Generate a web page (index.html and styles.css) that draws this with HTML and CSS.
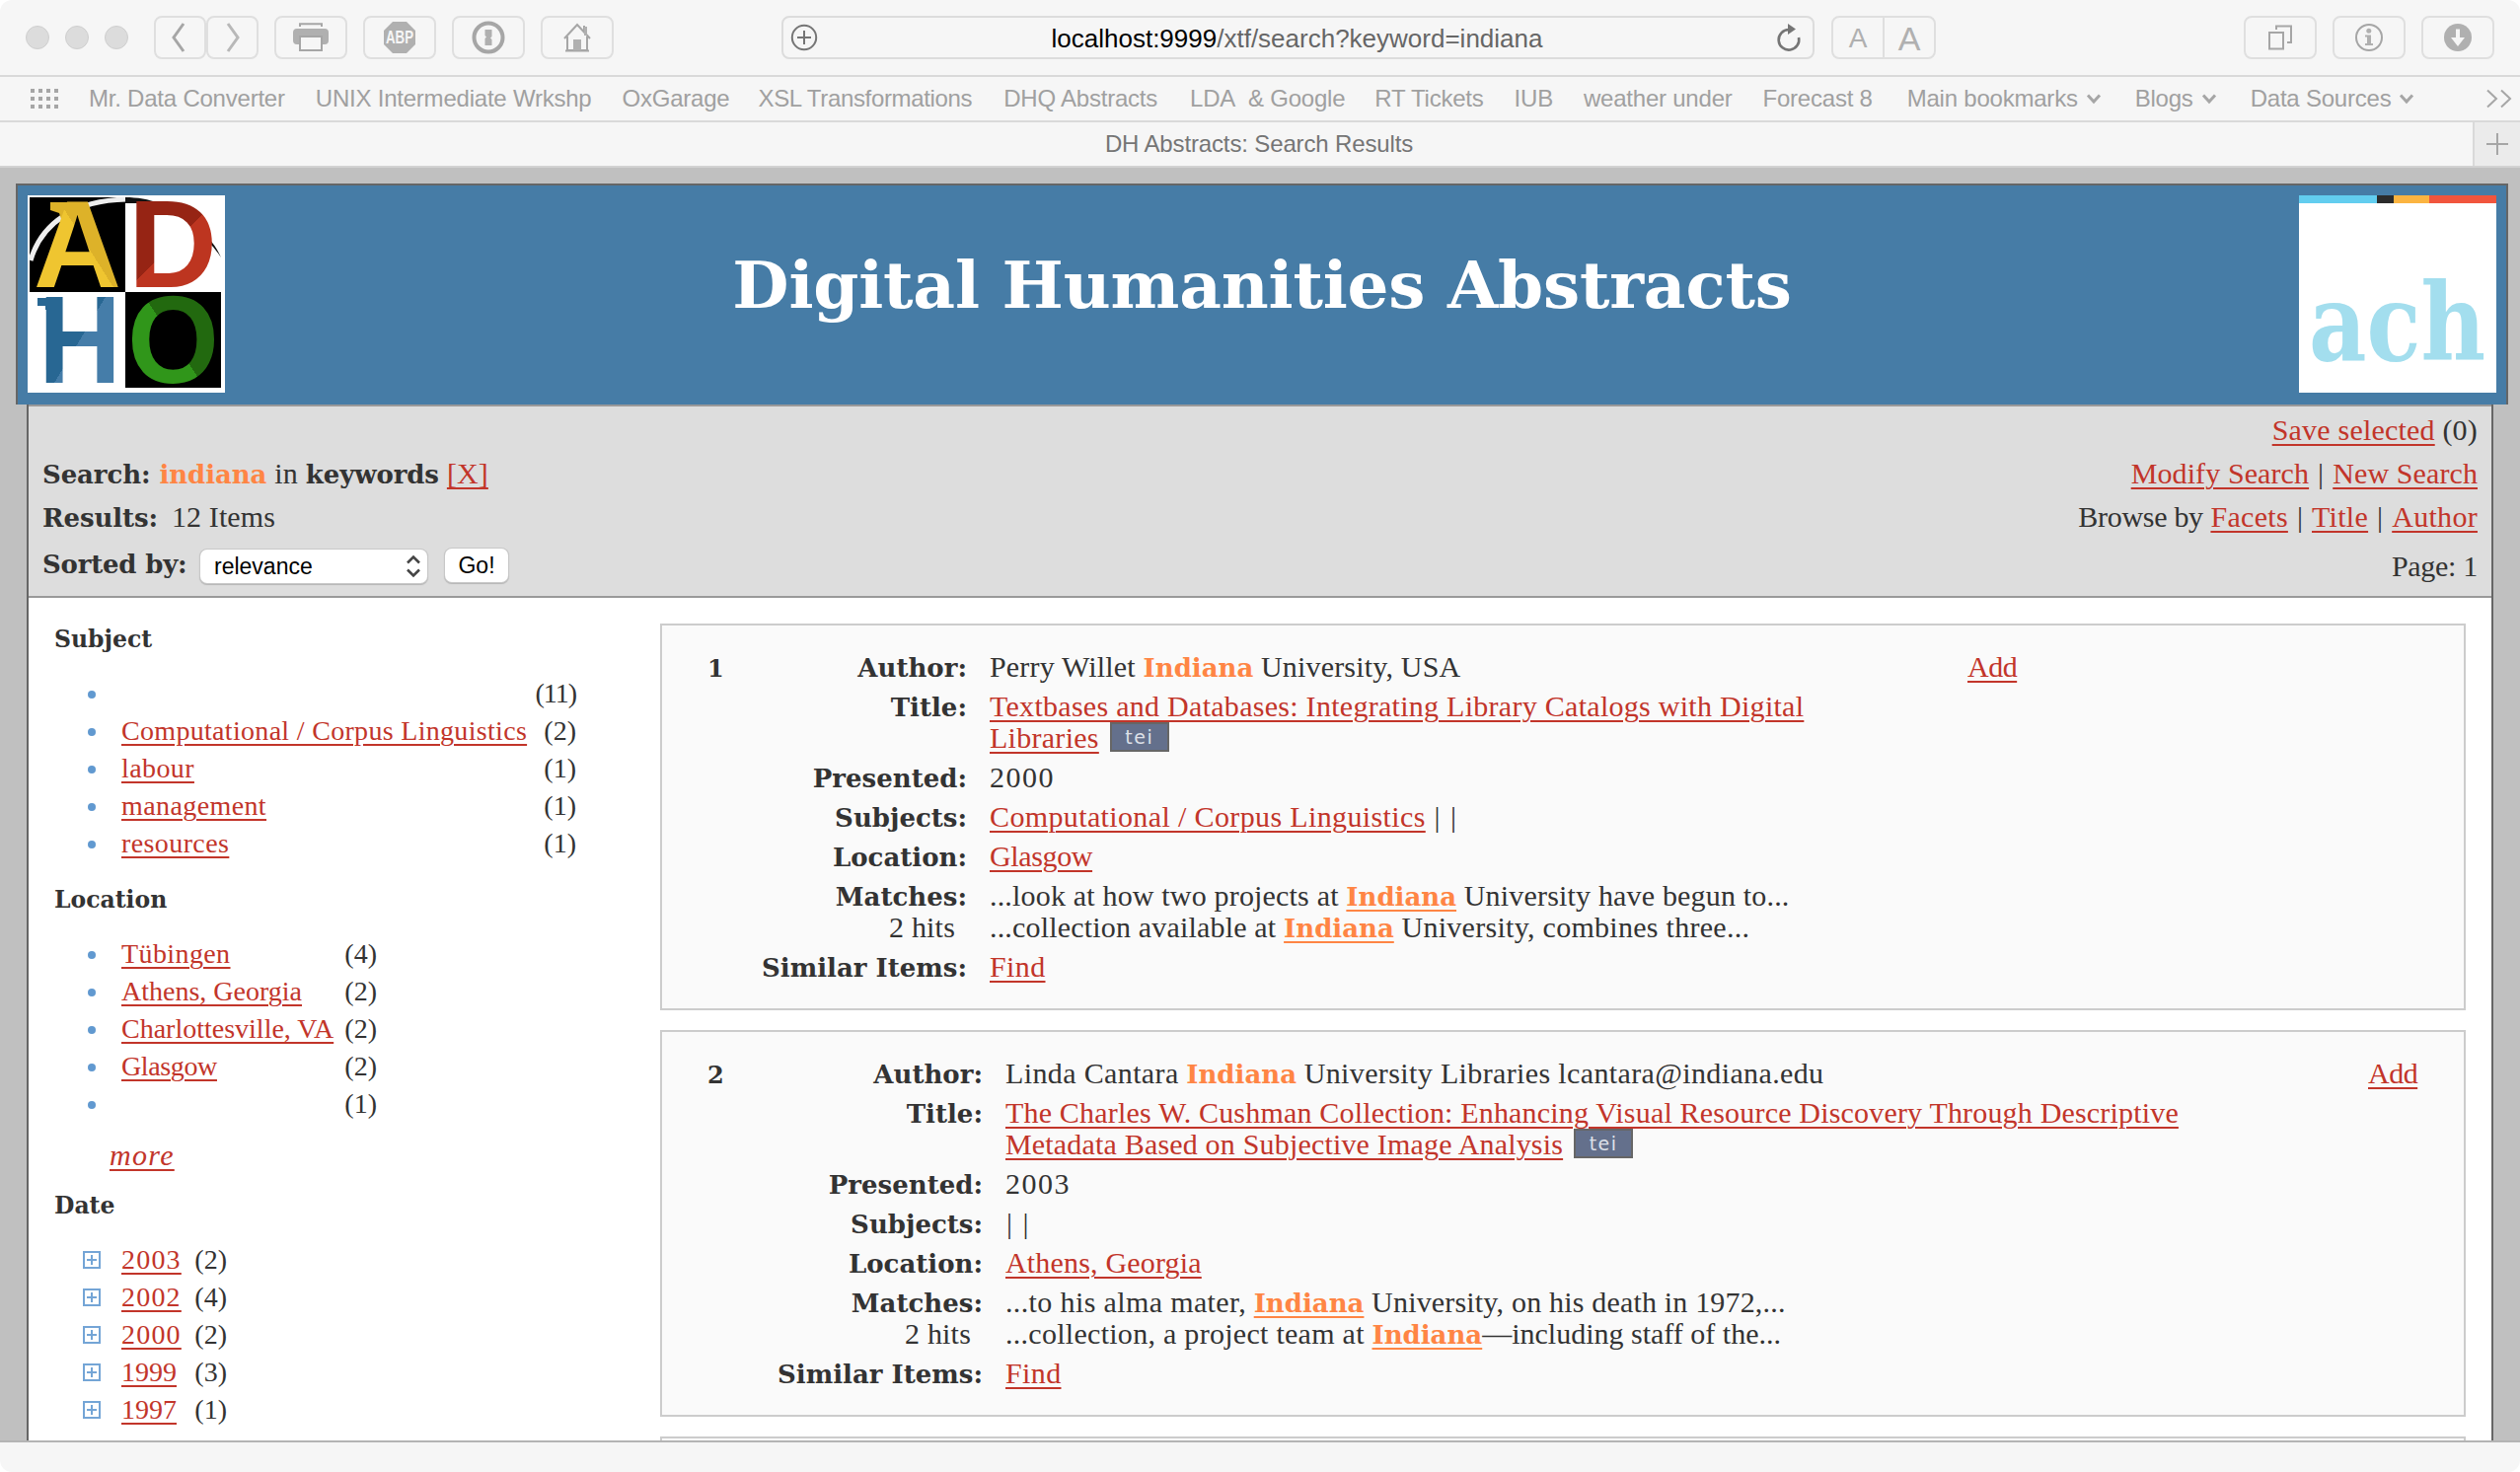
FILE: index.html
```html
<!DOCTYPE html>
<html lang="en">
<head>
<meta charset="utf-8">
<title>DH Abstracts: Search Results</title>
<link rel="stylesheet" href="styles.css">
</head>
<body>
<div class="window">
  <div class="toolbar">
    <div class="lights"><i></i><i></i><i></i></div>
    <div class="nav">
      <span class="btn back"><svg width="16" height="32" viewBox="0 0 16 32"><path d="M13 2 3 16l10 14" class="ln w3"/></svg></span>
      <span class="btn fwd"><svg width="16" height="32" viewBox="0 0 16 32"><path d="M3 2l10 14L3 30" class="ln w3 light"/></svg></span>
    </div>
    <span class="btn wide"><svg width="38" height="38" viewBox="0 -4 38 38"><path d="M8 4V1.200h22V4" class="ln w2"/><path d="M5 6h28a4 4 0 0 1 4 4v8a4 4 0 0 1-4 4h-2v-8H7v8H5a4 4 0 0 1-4-4v-8a4 4 0 0 1 4-4z" class="fl"/><path d="M8 14h22v14H8z" class="ln w2"/></svg></span>
    <span class="btn wide"><svg width="34" height="34" viewBox="0 0 34 34"><path d="M10 1h14l9 9v14l-9 9H10l-9-9V10z" class="fl"/><text x="17" y="23" class="abp" text-anchor="middle" textLength="28" lengthAdjust="spacingAndGlyphs">ABP</text></svg></span>
    <span class="btn wide"><svg width="34" height="34" viewBox="0 0 34 34"><circle cx="17" cy="17" r="14.500" class="ln w4"/><path d="M13.500 9h7v7l-1.500 1.500 1.500 1.500v6h-7v-7l1.500-1.500-1.500-1.500z" class="fl"/></svg></span>
    <span class="btn wide"><svg width="30" height="32" viewBox="0 0 30 32"><path d="M2 17 15 3l13 14M5 15v14h20V15M3 29.500h24M22 4v7" class="ln w2"/><path d="M22 5h3v9h-3zM11 18h8v11h-8z" class="fl"/></svg></span>
    <div class="address">
      <svg width="28" height="28" viewBox="0 0 28 28"><path d="M14 7v14M7 14h14" class="dk"/><circle cx="14" cy="14" r="12.200" class="dk"/></svg>
      <span class="url"><b>localhost:9999</b>/xtf/search?keyword=indiana</span>
      <svg width="26" height="30" viewBox="0 0 26 30"><path d="M13 7A10.300 10.300 0 1 0 23 15" class="dk w3"/><path d="M12 1v11l8-5.500z" class="dkf"/></svg>
    </div>
    <div class="sizes"><span class="small">A</span><span class="big">A</span></div>
    <div class="right">
      <span class="btn"><svg width="28" height="28" viewBox="0 0 28 28"><path d="M3 9h14v16.500H3zM10 6V2.500h15V19h-4" class="ln w2"/></svg></span>
      <span class="btn"><svg width="30" height="30" viewBox="0 0 30 30"><circle cx="15" cy="15" r="13" class="ln w2"/><circle cx="14.800" cy="8.300" r="2.500" class="fl"/><path d="M11 12.500h6v8.500h2v2h-8v-2h2v-6.500h-2z" class="fl"/></svg></span>
      <span class="btn"><svg width="30" height="30" viewBox="0 0 30 30"><circle cx="15" cy="15" r="14" class="fl"/><path d="M13 6.500h4V15h5l-7 9-7-9h5z" class="wf"/></svg></span>
    </div>
  </div>
  <div class="bookmarks">
    <svg class="dots" width="28" height="20" viewBox="0 0 28 20"><path d="M0 2h4m4 0h4m4 0h4m4 0h4M0 10h4m4 0h4m4 0h4m4 0h4M0 18h4m4 0h4m4 0h4m4 0h4" class="ln w4"/></svg>
    <span>Mr. Data Converter</span><span>UNIX Intermediate Wrkshp</span><span>OxGarage</span><span class="xsl">XSL Transformations</span><span class="dhq">DHQ Abstracts</span><span class="lda">LDA&nbsp; &amp; Google</span><span class="rt">RT Tickets</span><span>IUB</span><span>weather under</span><span>Forecast 8</span>
    <span class="folder">Main bookmarks<svg width="14" height="10" viewBox="0 0 14 10"><path d="M1 1.500 7 8l6-6.500" class="ln w3"/></svg></span>
    <span class="folder">Blogs<svg width="14" height="10" viewBox="0 0 14 10"><path d="M1 1.500 7 8l6-6.500" class="ln w3"/></svg></span>
    <span class="folder">Data Sources<svg width="14" height="10" viewBox="0 0 14 10"><path d="M1 1.500 7 8l6-6.500" class="ln w3"/></svg></span>
    <svg class="more-marks" width="28" height="20" viewBox="0 0 28 20"><path d="M2 1.500 11 10l-9 8.500M16 1.500 25 10l-9 8.500" class="ln w2"/></svg>
  </div>
  <div class="tabs">
    <span class="tab">DH Abstracts: Search Results</span>
    <span class="newtab"><svg width="22" height="22" viewBox="0 0 22 22"><path d="M11 0v22M0 11h22" class="ln w2"/></svg></span>
  </div>

  <div class="viewport">
    <div class="header">
      <svg class="logo" width="200" height="200" viewBox="0 0 200 200">
        <defs>
          <linearGradient id="ga" x1="0" y1="1" x2="1" y2="0"><stop offset=".55" stop-color="#efc530"/><stop offset=".55" stop-color="#ddb229"/></linearGradient>
          <linearGradient id="gd" gradientUnits="userSpaceOnUse" x1="108" y1="5" x2="188" y2="85"><stop offset=".52" stop-color="#962414"/><stop offset=".52" stop-color="#bd3520"/></linearGradient>
          <linearGradient id="gh" x1="0" y1="0" x2="1" y2="1"><stop offset=".5" stop-color="#286793"/><stop offset=".5" stop-color="#457da9"/></linearGradient>
          <linearGradient id="go" x1="0" y1="1" x2="1" y2="0"><stop offset=".5" stop-color="#30961a"/><stop offset=".5" stop-color="#22690f"/></linearGradient>
        </defs>
        <path d="M0 0h200v200H0z" fill="#fff"/>
        <path d="M2 2h97v96H2zM99 98h97v97H99z" fill="#000"/>
        <path d="M3 66C14 28 48 5 100 4" fill="none" stroke="#eee" stroke-width="5"/>
        <path d="M99 2c12 0 24 2 34 6H99zM184 44c5 6 9 12 12 19-4-6-8-11-12-15z" fill="#111"/>
        <path d="M51 7H23v8l9 3 2 6 12 0z" fill="#ddb229"/>
        <text x="6" y="93" class="l" fill="url(#ga)" textLength="89" lengthAdjust="spacingAndGlyphs">A</text>
        <text x="102" y="93" class="l" fill="url(#gd)" textLength="90" lengthAdjust="spacingAndGlyphs">D</text>
        <path d="M10 104h18l5 4v8H18v-4h-8z" fill="#286793"/>
        <text x="11" y="190" class="l" fill="url(#gh)" textLength="84" lengthAdjust="spacingAndGlyphs">H</text>
        <text x="101" y="190" class="l" fill="url(#go)" textLength="93" lengthAdjust="spacingAndGlyphs">O</text>
      </svg>
      <h1>Digital Humanities Abstracts</h1>
      <svg class="logo" width="200" height="200" viewBox="0 0 200 200">
        <path d="M0 0h200v200H0z" fill="#fff"/>
        <path d="M0 0h79v8H0z" fill="#62cdef"/><path d="M79 0h17v8H79z" fill="#2c2c2c"/><path d="M96 0h36v8H96z" fill="#fbb441"/><path d="M132 0h68v8h-68z" fill="#f1553d"/>
        <text x="10" y="167" class="ach" textLength="179" lengthAdjust="spacingAndGlyphs">ach</text>
      </svg>
    </div>
    <div class="page">
      <div class="summary">
        <div class="left">
          <p class="query"><b>Search:</b><b class="hit">indiana</b><span>in</span><b>keywords</b><a>[X]</a></p>
          <p><b class="lab">Results:</b>12 Items</p>
          <p class="sort"><b>Sorted by:</b><span class="select">relevance<svg width="14" height="22" viewBox="0 0 14 22"><path d="M1 7.500 7 1.500l6 6M1 14.500l6 6 6-6" class="arrow"/></svg></span><span class="go">Go!</span></p>
        </div>
        <div class="links">
          <p class="save"><a>Save selected</a> (0)</p>
          <p><a>Modify Search</a><i>|</i><a>New Search</a></p>
          <p class="browse"><span>Browse by</span> <a>Facets</a><i>|</i><a>Title</a><i>|</i><a>Author</a></p>
          <p class="pg">Page: 1</p>
        </div>
      </div>
      <div class="body">
        <div class="facets">
          <h3>Subject</h3>
          <ul class="subj">
            <li><span></span><em class="eleven">(11)</em></li>
            <li><a class="ccl">Computational / Corpus Linguistics</a><em>(2)</em></li>
            <li><a>labour</a><em>(1)</em></li>
            <li><a>management</a><em>(1)</em></li>
            <li><a>resources</a><em>(1)</em></li>
          </ul>
          <h3 class="second">Location</h3>
          <ul class="loc">
            <li><a>Tübingen</a><em>(4)</em></li>
            <li><a class="t0">Athens, Georgia</a><em>(2)</em></li>
            <li><a class="t0">Charlottesville, VA</a><em>(2)</em></li>
            <li><a class="tm">Glasgow</a><em>(2)</em></li>
            <li><span></span><em>(1)</em></li>
          </ul>
          <p class="more"><a>more</a></p>
          <h3>Date</h3>
          <ul class="date">
            <li><a>2003</a><em>(2)</em></li>
            <li><a>2002</a><em>(4)</em></li>
            <li><a>2000</a><em>(2)</em></li>
            <li><a class="t0">1999</a><em>(3)</em></li>
            <li><a class="t0">1997</a><em>(1)</em></li>
          </ul>
        </div>
        <div class="results">
          <div class="card one">
            <b class="num">1</b>
            <dl>
              <dt>Author:</dt><dd>Perry Willet <b class="hit">Indiana</b> University, USA</dd>
              <dt>Title:</dt><dd><a class="t3">Textbases and Databases: Integrating Library Catalogs with Digital<br>Libraries</a><span class="tei">tei</span></dd>
              <dt>Presented:</dt><dd class="yr">2000</dd>
              <dt>Subjects:</dt><dd><a class="t4">Computational / Corpus Linguistics</a> <span class="bars">| |</span></dd>
              <dt>Location:</dt><dd><a class="tm">Glasgow</a></dd>
              <dt>Matches:<span>2 hits</span></dt><dd>...look at how two projects at <b class="hit u">Indiana</b> University have begun to...<br>...collection available at <b class="hit u">Indiana</b> <span class="t3">University, combines three...</span></dd>
              <dt>Similar Items:</dt><dd><a class="t4">Find</a></dd>
            </dl>
            <a class="add">Add</a>
          </div>
          <div class="card two">
            <b class="num">2</b>
            <dl>
              <dt>Author:</dt><dd><span class="t4">Linda Cantara</span> <b class="hit">Indiana</b> <span class="t4">University Libraries lcantara@indiana.edu</span></dd>
              <dt>Title:</dt><dd><a>The Charles W. Cushman Collection: Enhancing Visual Resource Discovery Through Descriptive<br>Metadata Based on Subjective Image Analysis</a><span class="tei">tei</span></dd>
              <dt>Presented:</dt><dd class="yr">2003</dd>
              <dt>Subjects:</dt><dd><span class="bars">| |</span></dd>
              <dt>Location:</dt><dd><a>Athens, Georgia</a></dd>
              <dt>Matches:<span>2 hits</span></dt><dd><span class="t4">...to his alma mater,</span> <b class="hit u">Indiana</b> University, on his death in 1972,...<br><span class="t3">...collection, a project team at</span> <b class="hit u">Indiana</b><span class="t0">—including staff of the...</span></dd>
              <dt>Similar Items:</dt><dd><a class="t4">Find</a></dd>
            </dl>
            <a class="add">Add</a>
          </div>
          <div class="card next"></div>
        </div>
      </div>
    </div>
  </div>
  <div class="status"></div>
</div>
</body>
</html>
```
FILE: styles.css
```css
* { box-sizing: border-box; margin: 0; padding: 0; }
body { background: #fff; }
svg { display: block; flex: none; overflow: visible; }
i, em { font-style: normal; }

.window {
  width: 2554px; height: 1492px; overflow: hidden;
  display: flex; flex-direction: column;
  border-radius: 12px; background: #f6f6f6;
  font-family: "Liberation Sans", Arial, sans-serif;
}

/* icon strokes and fills */
.ln { fill: none; stroke: #a6a6a6; stroke-width: 2; }
.light { stroke: #b8b8b8; }
.w2 { stroke-width: 2; }
.w3 { stroke-width: 3; }
.w4 { stroke-width: 4; }
.fl { fill: #b0b0b0; }
.wf { fill: #f6f6f6; }
.dk { fill: none; stroke: #757575; stroke-width: 2; }
.dk.w3 { stroke-width: 2.6; }
.dkf { fill: #757575; }
.abp { font: bold 18px "Liberation Sans", Arial, sans-serif; fill: #f6f6f6; }

/* browser toolbar */
.toolbar {
  height: 78px; flex: none; display: flex; align-items: flex-start;
  padding: 16px 26px 0; border-bottom: 2px solid #d9d9d9;
}
.lights { display: flex; gap: 16px; margin: 10px 26px 0 0; }
.lights i { width: 24px; height: 24px; border-radius: 50%; background: #dcdcdc; border: 1px solid #cfcfcf; }
.btn {
  width: 74px; height: 44px; display: flex; align-items: center; justify-content: center;
  border: 2px solid #dfdfdf; border-radius: 8px;
}
.nav { display: flex; margin-right: 16px; }
.nav .btn { width: 53px; }
.nav .back { padding-right: 4px; }
.wide { margin-right: 16px; }
.address {
  width: 1047px; height: 44px; margin-left: 154px; padding: 0 11px 0 7px;
  display: flex; align-items: center; justify-content: space-between;
  border: 2px solid #dcdcdc; border-radius: 8px;
}
.url { font-size: 26px; line-height: 40px; color: #666; padding-top: 1px; }
.url b { font-weight: normal; color: #000; }
.sizes {
  width: 106px; height: 44px; margin-left: 17px; display: flex;
  border: 2px solid #dfdfdf; border-radius: 8px; color: #b0b0b0; line-height: 42px; text-align: center;
}
.sizes span { flex: 1; }
.sizes .small { font-size: 28px; border-right: 2px solid #dfdfdf; }
.sizes .big { font-size: 34px; }
.right { display: flex; gap: 16px; margin-left: auto; }

.bookmarks {
  height: 46px; flex: none; display: flex; align-items: center; gap: 31px;
  padding: 0 7px 0 31px; border-bottom: 2px solid #d9d9d9;
  font-size: 24px; letter-spacing: -0.22px; line-height: 44px; color: #a0a0a0; white-space: nowrap;
}
.xsl { letter-spacing: -0.34px; margin-left: -2px; }
.dhq { margin-left: 1px; }
.lda { margin-left: 2px; }
.rt { margin-left: -1px; }
.folder { display: flex; align-items: center; gap: 9px; margin-left: 4px; }
.more-marks { margin-left: auto; }
.tabs { height: 46px; flex: none; display: flex; border-bottom: 2px solid #d2d2d2; }
.tab { flex: 1; padding-left: 46px; text-align: center; font-size: 24px; letter-spacing: -0.14px; line-height: 44px; color: #757575; }
.newtab { width: 48px; display: flex; align-items: center; justify-content: center; background: #ebebeb; border-left: 2px solid #d9d9d9; }

/* page */
.viewport {
  height: 1290px; flex: none; overflow: hidden; padding-top: 16px;
  background: #c0c0c0; color: #333; font-family: "Liberation Serif", Georgia, serif;
}
.header {
  width: 2526px; height: 224px; margin-left: 16px; padding: 10px 10px 0;
  display: flex; justify-content: space-between;
  border: 2px solid #666; border-bottom: 0; background: #467ca6;
}
.header h1 {
  font: bold 66px/182px "DejaVu Serif", Georgia, serif;
  letter-spacing: -0.2px; color: #fff; white-space: nowrap;
}
.l { font: bold 126px "Liberation Sans", Arial, sans-serif; }
.ach { font: bold 109px "DejaVu Serif", serif; fill: #a3deee; }

.page { width: 2500px; margin-left: 27px; border: solid #666; border-width: 0 2px; background: #fff; }
.summary {
  height: 196px; padding: 2px 14px 0; display: flex; justify-content: space-between;
  background: #ddd; border: solid #999; border-width: 2px 0;
  font-size: 30px; line-height: 44px; letter-spacing: 0.1px;
}
.page b, dt, h3 { font-family: "DejaVu Serif", Georgia, serif; font-weight: bold; }
.summary b { font-size: 26px; letter-spacing: -0.1px; }
.left { padding-top: 44px; }
.left p { display: flex; align-items: baseline; height: 44px; white-space: pre; }
.left .lab { margin-right: 14px; }
.query b:first-child { margin-right: 9px; }
.query .hit, .query span, .query b:nth-of-type(3) { margin-right: 8px; }
.select, .go {
  font: 23px/34px "Liberation Sans", Arial, sans-serif; letter-spacing: 0; color: #000; background: #fff; height: 34px;
  border-radius: 7px; box-shadow: 0 0 0 1px #c8c8c8, 0 1px 1px 1px #b4b4b4;
}
.left .sort { margin-top: 4px; align-items: flex-start; }
.sort b { width: 146px; letter-spacing: -0.2px; }
.select { width: 230px; margin: 7px 18px 0 14px; padding: 0 7px 0 14px; display: flex; align-items: center; justify-content: space-between; }
.go { width: 64px; margin-top: 6px; text-align: center; }
.arrow { fill: none; stroke: #444; stroke-width: 2.5; }
.links { text-align: right; }
.links i { margin: 0 9px; }
.links .save { letter-spacing: 0.2px; }
.browse a { letter-spacing: 0.3px; }
.browse span { letter-spacing: -0.3px; }
.links .pg { margin-top: 6px; letter-spacing: -0.3px; }

a { color: #c2352a; text-decoration: underline; text-decoration-thickness: 2px; text-underline-offset: 4px; }
.hit { color: #ff8544; }

.body { display: flex; min-height: 900px; }
.facets { width: 640px; padding: 22px 0 0 26px; font-size: 28px; line-height: 38px; letter-spacing: 0.4px; }
h3 { font-size: 23.5px; line-height: 38px; letter-spacing: 0; padding-top: 1px; margin-bottom: 17px; }
h3.second { margin-top: 18px; }
ul { list-style: none; margin-left: 29px; }
li { display: flex; align-items: center; height: 38px; }
li em { margin-left: auto; letter-spacing: 0; }
li .eleven { letter-spacing: -1px; }
li::before { content: ""; width: 8px; height: 8px; margin: 2px 26px 0 5px; border-radius: 50%; background: #6199d0; flex: none; }
.subj { width: 500px; }
.loc { width: 298px; }
.date { width: 146px; }
.date a { letter-spacing: 1.2px; }
.date .t0 { letter-spacing: 0; }
.date li::before {
  width: 14px; height: 14px; margin: -1px 21px 0 0; border: 2px solid #74a5d6; border-radius: 0;
  background: linear-gradient(#74a5d6, #74a5d6) center / 10px 2px no-repeat, linear-gradient(#74a5d6, #74a5d6) center / 2px 10px no-repeat;
}
.more { margin: 14px 0 12px 56px; font-style: italic; font-size: 30px; letter-spacing: 1.3px; }
.facets .ccl { letter-spacing: 0.31px; }

.results { width: 1830px; padding-top: 26px; display: flex; flex-direction: column; gap: 20px; }
.card {
  height: 392px; padding: 26px 0; display: flex; align-items: baseline;
  border: 2px solid #ccc; background: #fafafa;
  font-size: 30px; line-height: 32px; letter-spacing: 0.18px; white-space: nowrap;
}
.num { width: 54px; padding-left: 46px; flex: none; font-size: 24px; }
dl { display: grid; grid-template-columns: 255px auto; align-items: baseline; column-gap: 23px; row-gap: 8px; flex: none; }
.two dl { grid-template-columns: 271px auto; }
dt { height: 30px; text-align: right; font-size: 26px; letter-spacing: 0; }
dt span { display: block; font: 30px/29px "Liberation Serif", Georgia, serif; letter-spacing: 0.18px; margin-right: 12px; }
.card .hit { font-size: 26px; line-height: 20px; letter-spacing: 0; }
.card .hit.u { text-decoration: underline; text-decoration-thickness: 2px; text-underline-offset: 4px; }
.one dl { width: 1269px; }
.two dl { width: 1675px; }
.card .add { letter-spacing: -0.5px; }
.tei {
  display: inline-block; vertical-align: top; width: 60px; height: 30px; margin-left: 11px;
  border: 2px solid #666; background: #64708c; color: #dde0e8;
  font: 19px/26px "DejaVu Sans", sans-serif; letter-spacing: 1.5px; text-align: center;
}
.yr { letter-spacing: 1.5px; }
.bars { letter-spacing: 1.5px; margin-left: 1px; }
.t0 { letter-spacing: 0; }
.t3 { letter-spacing: 0.28px; }
.t4 { letter-spacing: 0.37px; }
.tm { letter-spacing: -0.37px; }

.status { height: 32px; flex: none; border-top: 2px solid #b4b4b4; }
```
